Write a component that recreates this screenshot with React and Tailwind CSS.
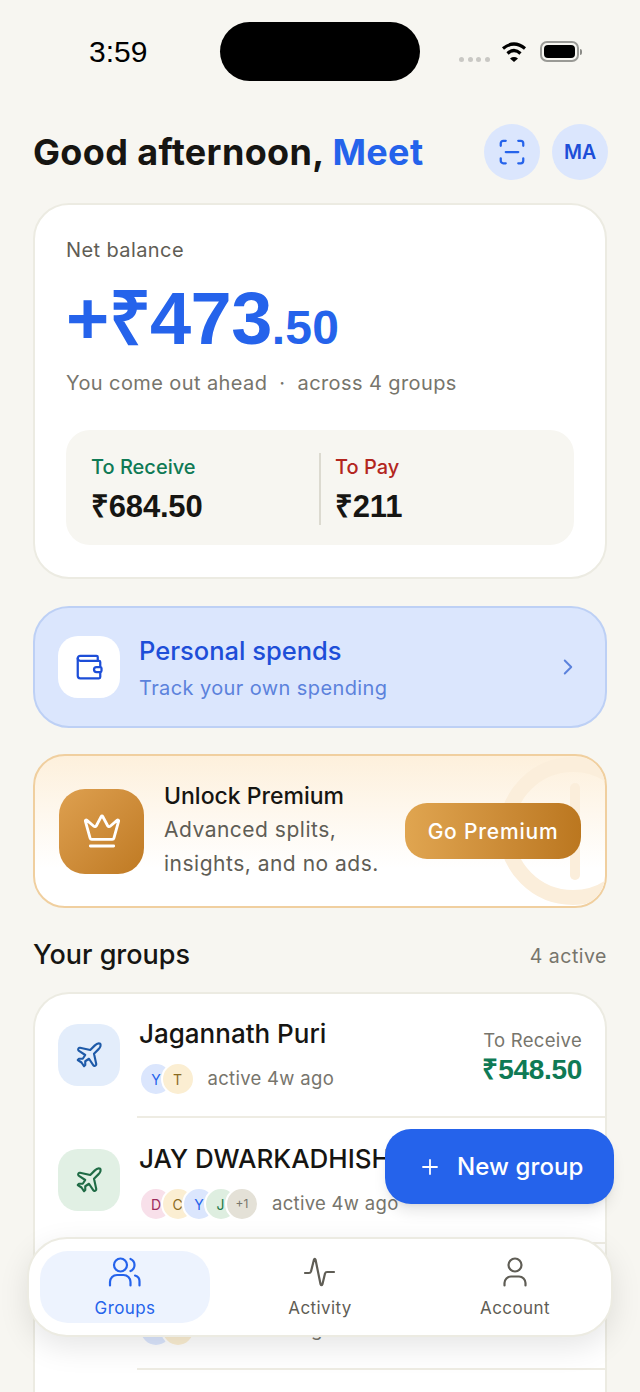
import { ChevronRight, Crown, Plane, Plus, ScanLine, Wallet } from "lucide-react";

const sans = "font-['Inter',sans-serif]";
const nums = "font-['Liberation_Sans',sans-serif]";

const avatarTones = {
  Y: "bg-[#dbe6fd] text-[#2563eb]",
  T: "bg-[#fbeed2] text-[#8a6a1f]",
  C: "bg-[#fbeed2] text-[#8a6a1f]",
  D: "bg-[#f8e0ea] text-[#9d2a5c]",
  J: "bg-[#deeee0] text-[#1f7a4a]",
  "+1": "bg-[#e4e1d7] text-[#77756c]",
};

const groups = [
  { name: "Jagannath Puri", tone: "bg-[#e3edfb] text-[#1e5aa8]", people: ["Y", "T"], label: "To Receive", amount: "₹548.50" },
  { name: "JAY DWARKADHISH", tone: "bg-[#e1f0e4] text-[#1f6b45]", people: ["D", "C", "Y", "J", "+1"] },
  { name: "Goa Trip", tone: "bg-[#e3edfb] text-[#1e5aa8]", people: ["Y", "T"] },
];

function Avatars({ people }) {
  return (
    <div className="flex">
      {people.map((p, i) => (
        <span
          key={p + i}
          className={`flex h-[34px] w-[34px] items-center justify-center rounded-full border-2 border-white ${p === "+1" ? "text-[12px]" : "text-[14px]"} ${i > 0 ? "-ml-[12.5px]" : ""} ${avatarTones[p]}`}
        >
          {p}
        </span>
      ))}
    </div>
  );
}

function GroupRow({ group, first }) {
  return (
    <div className={`flex items-center pl-[23px] pr-[23px] ${first ? "h-[122px]" : "h-[124px]"}`}>
      <div className={`flex h-[62px] w-[62px] shrink-0 items-center justify-center rounded-[20px] ${group.tone}`}>
        <Plane size={30} strokeWidth={1.7} />
      </div>
      <div className="ml-[19px] min-w-0 flex-1">
        <div className="whitespace-nowrap pt-[4px] text-[26px] leading-[32px] font-medium text-[#161512]">{group.name}</div>
        <div className="mt-[12px] flex items-center gap-[13px]">
          <Avatars people={group.people} />
          <span className="text-[18.5px] tracking-[0.3px] text-[#77756c]">active 4w ago</span>
        </div>
      </div>
      {group.amount ? (
        <div className="mt-[4px] text-right">
          <div className="text-[18.5px] leading-[24px] tracking-[0.3px] text-[#77756c]">{group.label}</div>
          <div className={`${nums} mt-[2px] text-[28px] leading-[32px] font-bold tracking-[-0.3px] text-[#0f7a55]`}>{group.amount}</div>
        </div>
      ) : null}
    </div>
  );
}

function NavItem({ label, active, children }) {
  return (
    <div className={`flex h-[72px] w-[170px] flex-col items-center justify-center rounded-[28px] pt-[2px] ${active ? "bg-[#edf3fe] text-[#2563eb]" : "text-[#5f5d55]"}`}>
      {children}
      <span className="mt-[10px] text-[17px] leading-[22px] tracking-[0.4px]">{label}</span>
    </div>
  );
}

export default function App() {
  return (
    <div className={`${sans} relative h-[1392px] w-[640px] overflow-hidden bg-[#f7f6f1]`}>
      {/* status bar */}
      <div className="flex h-[124px] items-start pt-[22px]">
        <div className={`${nums} w-[220px] pl-[89px] text-[30px] leading-[60px] font-medium text-black`}>3:59</div>
        <div className="h-[59px] w-[200px] rounded-full bg-black" />
        <div className="flex h-[59px] flex-1 items-center pl-[39px]">
          <div className="mt-[15px] flex gap-[3.5px]">
            <span className="h-[5px] w-[5px] rounded-full bg-[#c9c8c4]" />
            <span className="h-[5px] w-[5px] rounded-full bg-[#c9c8c4]" />
            <span className="h-[5px] w-[5px] rounded-full bg-[#c9c8c4]" />
            <span className="h-[5px] w-[5px] rounded-full bg-[#c9c8c4]" />
          </div>
          <svg className="ml-[10px]" width="28" height="22" viewBox="0 0 28 22">
            <path d="M14 21 L10 17.4 Q14 14.6 18 17.4 Z" fill="black" />
            <path d="M3 7.5 Q14 -1.5 25 7.5" fill="none" stroke="black" strokeWidth="3.2" />
            <path d="M7.5 12.5 Q14 6.5 20.5 12.5" fill="none" stroke="black" strokeWidth="3.2" />
          </svg>
          <div className="ml-[12px] flex items-center">
            <div className="h-[21px] w-[39px] rounded-[7px] border-2 border-[#9a9a96] p-[2px]">
              <div className="h-full w-full rounded-[4px] bg-black" />
            </div>
            <div className="ml-[1px] h-[6px] w-[2px] rounded-r-full bg-[#8b8b87]" />
          </div>
        </div>
      </div>

      <div className="px-[33px]">
        {/* greeting */}
        <div className="flex h-[56px] items-center justify-between">
          <h1 className="text-[36px] font-bold tracking-[0.35px] whitespace-nowrap text-[#161512]">
            Good afternoon, <span className="text-[#2563eb]">Meet</span>
          </h1>
          <div className="-mr-[1px] flex gap-[12px]">
            <div className="flex h-[56px] w-[56px] items-center justify-center rounded-full bg-[#dbe6fd] text-[#2563eb]">
              <ScanLine size={30} strokeWidth={1.8} />
            </div>
            <div className="flex h-[56px] w-[56px] items-center justify-center rounded-full bg-[#dbe6fd] pt-[1px] text-[19.5px] font-semibold text-[#1d4ed8]">MA</div>
          </div>
        </div>

        {/* balance */}
        <div className="mt-[23px] h-[376px] rounded-[36px] border-2 border-[#ecebe2] bg-white px-[31px] pt-[30px]">
          <div className="text-[20px] leading-[30px] tracking-[0.4px] text-[#5f5d55]">Net balance</div>
          <div className={`${nums} mt-[14px] flex items-baseline leading-[80px] font-bold text-[#2563eb]`}>
            <span className="text-[74px] tracking-[-0.6px]">+₹473</span>
            <span className="text-[48px] tracking-[0.3px]">.50</span>
          </div>
          <div className="text-[20px] leading-[30px] tracking-[0.4px] text-[#77756c]">You come out ahead &nbsp;·&nbsp; across 4 groups</div>
          <div className="mt-[32px] flex h-[115px] items-center rounded-[24px] bg-[#f7f6f1] px-[25px] pt-[2px]">
            <div className="w-[228px]">
              <div className="text-[20px] leading-[28px] font-medium text-[#0f7a55]">To Receive</div>
              <div className={`${nums} mt-[8px] text-[31px] leading-[36px] font-bold tracking-[-0.2px] text-[#161512]`}>₹684.50</div>
            </div>
            <div className="h-[72px] w-[2px] bg-[#dcdad0]" />
            <div className="pl-[14px]">
              <div className="text-[20px] leading-[28px] font-medium text-[#b3261e]">To Pay</div>
              <div className={`${nums} mt-[8px] text-[31px] leading-[36px] font-bold tracking-[-0.2px] text-[#161512]`}>₹211</div>
            </div>
          </div>
        </div>

        {/* personal spends */}
        <div className="mt-[27px] flex h-[122px] items-center rounded-[36px] border-2 border-[#bdd0f5] bg-[#dbe6fd] pl-[23px] pr-[24px]">
          <div className="flex h-[62px] w-[62px] items-center justify-center rounded-[20px] bg-white text-[#1d4ed8]">
            <Wallet size={30} strokeWidth={1.8} />
          </div>
          <div className="ml-[19px] flex-1 pt-[2px]">
            <div className="text-[25.5px] leading-[34px] font-medium text-[#1d4ed8]">Personal spends</div>
            <div className="mt-[6px] text-[20px] leading-[28px] tracking-[0.4px] text-[#5b82dc]">Track your own spending</div>
          </div>
          <ChevronRight size={26} strokeWidth={1.8} className="text-[#5b82dc]" />
        </div>

        {/* premium */}
        <div className="relative mt-[26px] flex h-[154px] items-center overflow-hidden rounded-[32px] border-2 border-[#f0cf9f] bg-gradient-to-b from-[#fdf0dc] to-white to-75% pl-[24px] pr-[24px]">
          <div className="absolute top-[1px] -right-[42px] h-[148px] w-[148px] rounded-full border-[15px] border-[#fbeedb]" />
          <div className="absolute top-[27px] right-[25px] h-[97px] w-[10px] rounded-full bg-[#fbeedb]" />
          <div className="relative flex h-[85px] w-[85px] shrink-0 items-center justify-center rounded-[26px] bg-gradient-to-br from-[#dea04f] to-[#bf7a22] text-white">
            <Crown size={40} strokeWidth={1.7} />
          </div>
          <div className="relative ml-[20px] flex-1">
            <div className="text-[23px] leading-[30px] font-medium text-[#161512]">Unlock Premium</div>
            <div className="mt-[2px] text-[21px] leading-[34px] tracking-[0.5px] whitespace-nowrap text-[#5f5d55]">
              Advanced splits,
              <br />
              insights, and no ads.
            </div>
          </div>
          <div className="relative flex h-[56px] w-[176px] shrink-0 items-center justify-center rounded-[22px] bg-gradient-to-r from-[#e0a550] to-[#bb771f] pt-[1px] text-[21px] font-medium tracking-[0.8px] text-white">
            Go Premium
          </div>
        </div>

        {/* groups */}
        <div className="mt-[28px] flex h-[38px] items-center justify-between">
          <h2 className="text-[27px] font-medium text-[#161512]">Your groups</h2>
          <span className="mt-[4px] text-[19.5px] tracking-[0.5px] text-[#77756c]">4 active</span>
        </div>
        <div className="mt-[18px] rounded-t-[36px] border-x-2 border-t-2 border-[#ecebe2] bg-white">
          {groups.map((g, i) => (
            <div key={g.name}>
              {i > 0 ? <div className="ml-[102px] h-[2px] bg-[#eeece3]" /> : null}
              <GroupRow group={g} first={i === 0} />
            </div>
          ))}
          <div className="ml-[102px] h-[2px] bg-[#eeece3]" />
          <div className="h-[40px]" />
        </div>
      </div>

      {/* new group button */}
      <div className="absolute top-[1129px] left-[385px] flex h-[75px] w-[229px] items-center rounded-[26px] bg-[#2563eb] pl-[33px] text-white shadow-lg">
        <Plus size={24} strokeWidth={1.8} />
        <span className="ml-[15px] text-[24px] font-medium tracking-[0.1px]">New group</span>
      </div>

      {/* bottom nav */}
      <div className="absolute top-[1237px] left-[27px] flex h-[100px] w-[586px] items-center justify-between rounded-[40px] border-2 border-[#ecebe2] bg-white px-[11px] shadow-[0_10px_30px_rgba(0,0,0,0.1)]">
        <NavItem label="Groups" active>
          <svg width="34" height="30" viewBox="0 0 34 30" fill="none" stroke="currentColor" strokeWidth="2.2" strokeLinecap="round">
            <circle cx="12.5" cy="8" r="6.5" />
            <path d="M22.5 2 A6.5 6.5 0 0 1 22.5 14" />
            <path d="M2 28.5 V25 A7 7 0 0 1 9 18 H15.5 A7 7 0 0 1 22.5 25 V28.5" />
            <path d="M27 18.5 A6 6 0 0 1 31.5 24.5 V28.5" />
          </svg>
        </NavItem>
        <NavItem label="Activity">
          <svg width="34" height="30" viewBox="0 0 34 30" fill="none" stroke="currentColor" strokeWidth="2.2" strokeLinecap="round" strokeLinejoin="round">
            <path d="M2 16 H6 Q7.5 16 8 14.5 L11 2.5 Q11.5 1 12.5 2.5 L17.5 27 Q18.5 29.5 19.5 27 L22 16.5 Q22.5 15 24 15 H31" />
          </svg>
        </NavItem>
        <NavItem label="Account">
          <svg width="34" height="30" viewBox="0 0 34 30" fill="none" stroke="currentColor" strokeWidth="2.2" strokeLinecap="round">
            <circle cx="17" cy="8" r="6.5" />
            <path d="M6.5 28.5 V26 A6.5 6.5 0 0 1 13 19.5 H21 A6.5 6.5 0 0 1 27.5 26 V28.5" />
          </svg>
        </NavItem>
      </div>
    </div>
  );
}
